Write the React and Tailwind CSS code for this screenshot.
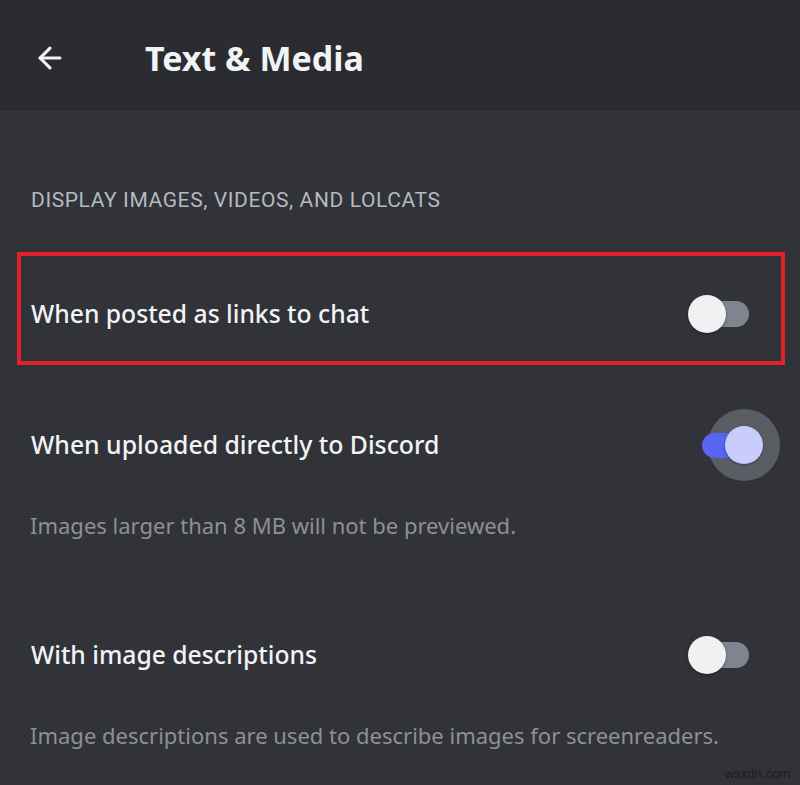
import { ArrowLeft } from "lucide-react";

function ToggleOff({ className = "" }) {
    return (
        <div className={"flex shrink-0 items-center " + className}>
            <div className="relative z-10 h-[38px] w-[38px] rounded-full bg-[#f0f1f3] shadow-[0_1px_3px_rgba(0,0,0,0.35)]" />
            <div className="-ml-[29px] h-[26px] w-[52px] rounded-full bg-[#80848e]" />
        </div>
    );
}

function ToggleOn({ className = "" }) {
    return (
        <div className={"relative flex shrink-0 items-center " + className}>
            {/* focus halo behind the knob */}
            <div className="absolute right-[-17px] h-[72px] w-[72px] rounded-full bg-[#5b5d65]" />
            <div className="relative h-[25px] w-[44px] rounded-full bg-[#5865f2]" />
            <div className="relative -ml-[21px] h-[38px] w-[38px] rounded-full bg-[#c9cdfb] shadow-[0_1px_3px_rgba(0,0,0,0.35)]" />
        </div>
    );
}

export default function App() {
    return (
        <div className="relative flex h-[785px] w-[800px] flex-col overflow-hidden bg-[#313338] font-['Noto_Sans',sans-serif]">
            <div className="flex h-[110px] shrink-0 items-center border-b border-[#26272b] bg-[#2b2c31] pt-[6px]">
                <ArrowLeft className="ml-[33px] text-[#f2f3f5]" size={34} strokeWidth={2.2} />
                <h1 className="ml-[78px] text-[34px] font-bold leading-none text-[#f2f3f5]">Text &amp; Media</h1>
            </div>

            <div className="pl-[31px] pt-[79px] font-['Roboto',sans-serif] text-[21px] leading-[22px] tracking-[0.6px] text-[#b5b9c0]">
                DISPLAY IMAGES, VIDEOS, AND LOLCATS
            </div>

            <div className="ml-[17px] mt-[41px] flex h-[113px] w-[768px] items-center border-4 border-[#e0222c] pt-[10px]">
                <span className="pl-[10px] text-[24.7px] font-medium text-[#f2f3f5]">When posted as links to chat</span>
                <ToggleOff className="ml-auto mr-[32px]" />
            </div>

            <div className="mt-[44px] flex h-[72px] items-center">
                <span className="pl-[31px] text-[24.8px] font-medium text-[#f2f3f5]">When uploaded directly to Discord</span>
                <ToggleOn className="ml-auto mr-[37px]" />
            </div>
            <div className="mt-[29px] h-[30px] pl-[30px] text-[22px] leading-[30px] text-[#8d9097]">
                Images larger than 8 MB will not be previewed.
            </div>

            <div className="mt-[79px] flex h-[72px] items-center">
                <span className="pl-[31px] text-[24.7px] font-medium text-[#f2f3f5]">With image descriptions</span>
                <ToggleOff className="ml-auto mr-[51px]" />
            </div>
            <div className="mt-[29px] h-[30px] pl-[30px] text-[22px] leading-[30px] text-[#8d9097]">
                Image descriptions are used to describe images for screenreaders.
            </div>

            <div className="mt-auto self-end pb-[2px] pr-[10px] font-['Liberation_Sans',sans-serif] text-[13px] text-[#1c1c1e]">
                wsxdn.com
            </div>
        </div>
    );
}
